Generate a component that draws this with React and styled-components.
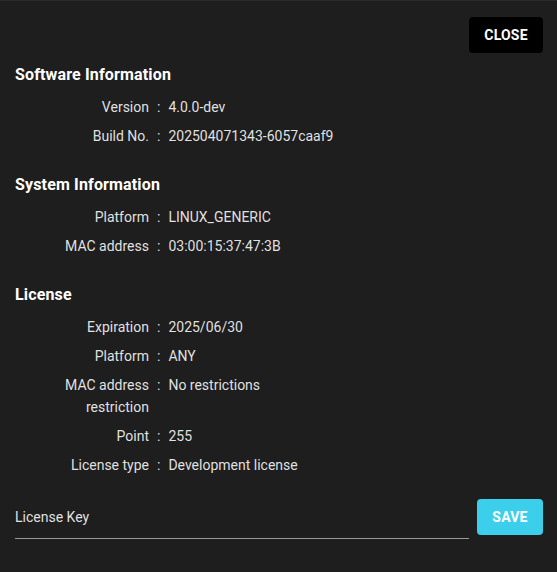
import React from "react";
import styled, { createGlobalStyle } from "styled-components";

const Global = createGlobalStyle`
  html, body { margin: 0; padding: 0; background: #1e1e1e; }
  body { font-family: Roboto, "Liberation Sans", Arial, sans-serif; }
`;

const Dialog = styled.div`
  box-sizing: border-box;
  width: 557px;
  height: 572px;
  background: #1e1e1e;
  border-top: 1px solid #2a2a2a;
  padding: 16px 14px 0 15px;
  color: rgba(255, 255, 255, 0.88);
  display: flex;
  flex-direction: column;
`;

const TopBar = styled.div`
  display: flex;
  justify-content: flex-end;
`;

const Button = styled.button`
  box-sizing: border-box;
  height: 36px;
  padding: 0;
  border: none;
  border-radius: 4px;
  background: ${(p) => (p.$primary ? "#3bcfec" : "#000")};
  color: #fff;
  font-family: Roboto, "Liberation Sans", Arial, sans-serif;
  font-weight: 700;
  font-size: 14px;
  letter-spacing: 0.2px;
  text-transform: uppercase;
  cursor: pointer;
  width: ${(p) => p.$width};
  flex: none;
`;

const Section = styled.section`
  margin-top: ${(p) => (p.$first ? "10px" : "26px")};
`;

const Heading = styled.h2`
  margin: 0 0 9px;
  font-size: 16px;
  line-height: 24px;
  font-weight: 700;
  letter-spacing: 0.15px;
  color: #fff;
`;

const Rows = styled.div`
  display: grid;
  grid-template-columns: 134px auto 1fr;
  row-gap: 7px;
`;

const Label = styled.div`
  text-align: right;
  font-size: 14px;
  line-height: 22px;
  padding-left: 40px;
`;

const Colon = styled.div`
  font-size: 14px;
  line-height: 22px;
  padding: 0 8px;
`;

const Value = styled.div`
  font-size: 14px;
  line-height: 22px;
`;

const KeyRow = styled.div`
  margin-top: 23px;
  display: flex;
  align-items: flex-start;
  gap: 8px;
`;

const KeyField = styled.div`
  flex: 1;
  height: 40px;
  border-bottom: 1px solid #9a9a9a;
  display: flex;
  align-items: flex-end;
  padding-bottom: 11px;
  box-sizing: border-box;
  font-size: 14px;
  line-height: 20px;
  color: rgba(255, 255, 255, 0.88);
`;

const sections = [
  {
    title: "Software Information",
    rows: [
      ["Version", "4.0.0-dev"],
      ["Build No.", "202504071343-6057caaf9"],
    ],
  },
  {
    title: "System Information",
    rows: [
      ["Platform", "LINUX_GENERIC"],
      ["MAC address", "03:00:15:37:47:3B"],
    ],
  },
  {
    title: "License",
    rows: [
      ["Expiration", "2025/06/30"],
      ["Platform", "ANY"],
      ["MAC address restriction", "No restrictions"],
      ["Point", "255"],
      ["License type", "Development license"],
    ],
  },
];

export default function App() {
  return (
    <>
      <Global />
      <Dialog>
        <TopBar>
          <Button $width="74px">Close</Button>
        </TopBar>
        {sections.map((s, i) => (
          <Section key={s.title} $first={i === 0}>
            <Heading>{s.title}</Heading>
            <Rows>
              {s.rows.map(([l, v]) => (
                <React.Fragment key={l}>
                  <Label>{l}</Label>
                  <Colon>:</Colon>
                  <Value>{v}</Value>
                </React.Fragment>
              ))}
            </Rows>
          </Section>
        ))}
        <KeyRow>
          <KeyField>License Key</KeyField>
          <Button $primary $width="66px">Save</Button>
        </KeyRow>
      </Dialog>
    </>
  );
}
